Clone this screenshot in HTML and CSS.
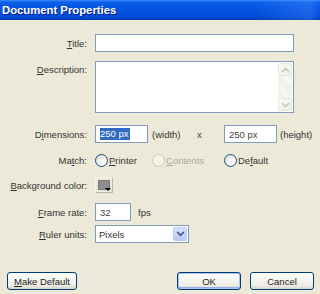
FILE: index.html
```html
<!DOCTYPE html>
<html>
<head>
<meta charset="utf-8">
<link rel="stylesheet" href="styles.css">
</head>
<body>
<div class="dialog">
  <div class="titlebar"><span>Document Properties</span></div>
  <div class="form">
    <div class="row r-title">
      <label class="lbl"><u>T</u>itle:</label>
      <div class="input wide"></div>
    </div>
    <div class="row r-desc">
      <label class="lbl"><u>D</u>escription:</label>
      <div class="textarea">
        <div class="ta-body"></div>
        <div class="scroll">
          <div class="sbtn"><svg width="9" height="6" viewBox="0 0 9 6"><path d="M1 5 L4.5 1.5 L8 5" fill="none" stroke="#C9C7BA" stroke-width="1.6"/></svg></div>
          <div class="track"></div>
          <div class="sbtn"><svg width="9" height="6" viewBox="0 0 9 6"><path d="M1 1 L4.5 4.5 L8 1" fill="none" stroke="#C9C7BA" stroke-width="1.6"/></svg></div>
        </div>
      </div>
    </div>
    <div class="row r-dim">
      <label class="lbl">D<u>i</u>mensions:</label>
      <div class="input dim"><span class="sel">250 px</span></div>
      <span class="unit-w">(width)</span>
      <span class="times">x</span>
      <div class="input dim"><span class="val">250 px</span></div>
      <span class="unit-h">(height)</span>
    </div>
    <div class="row r-match">
      <label class="lbl">Ma<u>t</u>ch:</label>
      <div class="opt o1"><span class="radio"></span><span><u>P</u>rinter</span></div>
      <div class="opt o2 disabled"><span class="radio"></span><span><u>C</u>ontents</span></div>
      <div class="opt"><span class="radio"></span><span>De<u>f</u>ault</span></div>
    </div>
    <div class="row r-bg">
      <label class="lbl"><u>B</u>ackground color:</label>
      <div class="swatch"><div class="chip"></div><span class="tri"></span></div>
    </div>
    <div class="row r-fps">
      <label class="lbl"><u>F</u>rame rate:</label>
      <div class="input fps"><span class="val">32</span></div>
      <span class="unit-fps">fps</span>
    </div>
    <div class="row r-ruler">
      <label class="lbl"><u>R</u>uler units:</label>
      <div class="select">
        <span class="val">Pixels</span>
        <span class="arrow"><svg width="9" height="6" viewBox="0 0 9 6"><path d="M1.2 1 L4.5 4.3 L7.8 1" fill="none" stroke="#4D6185" stroke-width="1.8"/></svg></span>
      </div>
    </div>
  </div>
  <div class="buttons">
    <div class="btn make"><span><u>M</u>ake Default</span></div>
    <div class="spacer"></div>
    <div class="btn ok"><span>OK</span></div>
    <div class="btn cancel"><span>Cancel</span></div>
  </div>
</div>
</body>
</html>
```
FILE: styles.css
```css
html, body {
  margin: 0;
  padding: 0;
}
body {
  width: 320px;
  height: 294px;
  overflow: hidden;
  background: #ECE9D8;
  font-family: "Liberation Sans", Arial, sans-serif;
  font-size: 9.5px;
  color: #222;
}
u { text-decoration: underline; text-underline-offset: 1px; }
.dialog {
  height: 294px;
  display: flex;
  flex-direction: column;
}
.titlebar {
  height: 20px;
  flex: none;
  box-sizing: border-box;
  padding-left: 2px;
  display: flex;
  align-items: center;
  color: #fff;
  font-weight: bold;
  font-size: 11.3px;
  text-shadow: 1px 1px 0 #0A1E8C;
  background:
    linear-gradient(90deg, rgba(0,0,0,0) 0%, rgba(0,0,0,0) 80%, rgba(80,140,255,0.35) 97%, rgba(0,0,0,0) 100%),
    linear-gradient(180deg, #3A8CFF 0px, #0A61E9 2px, #0558E4 6px, #0151DE 12px, #004AD5 17px, #003FC0 19px, #00349F 20px);
  border-bottom: 0;
}
.form {
  padding-top: 14px;
}
.row {
  display: flex;
  align-items: center;
  height: 18px;
}
.lbl {
  width: 87px;
  flex: none;
  margin-right: 8px;
  text-align: right;
  color: #333;
}
.input {
  box-sizing: border-box;
  height: 18px;
  border: 1px solid #7F9DB9;
  background: #fff;
  display: flex;
  align-items: center;
  padding: 0 3px;
  flex: none;
}
.input .val { color: #444; }
.wide { width: 199px; }
.r-desc {
  margin-top: 9px;
  height: 52px;
  align-items: flex-start;
}
.r-desc .lbl { padding-top: 3px; }
.textarea {
  box-sizing: border-box;
  width: 199px;
  height: 52px;
  border: 1px solid #7F9DB9;
  background: #fff;
  display: flex;
  padding: 1px 1px 1px 0;
}
.ta-body { flex: 1; }
.scroll {
  width: 14px;
  display: flex;
  flex-direction: column;
}
.sbtn {
  box-sizing: border-box;
  height: 13px;
  width: 14px;
  border: 1px solid #E8E6DA;
  border-radius: 2px;
  background: linear-gradient(135deg, #FBFBF8, #EEEDE5);
  display: flex;
  align-items: center;
  justify-content: center;
}
.track {
  flex: 1;
  background-color: #F4F3EE;
  background-image: repeating-linear-gradient(45deg, #EEEDE5 0 1px, #FBFBF9 1px 2px);
}
.r-dim { margin-top: 12px; }
.dim { width: 53px; padding-left: 4px; }
.sel {
  background: #316AC5;
  color: #fff;
  line-height: 12px;
  padding: 0 1px 0 0;
}
.unit-w { width: 45px; margin-left: 4px; flex: none; color: #333; }
.times { width: 27px; flex: none; color: #444; }
.unit-h { margin-left: 3px; color: #333; }
.r-match { margin-top: 8px; }
.opt {
  display: flex;
  align-items: center;
  flex: none;
  color: #333;
}
.o1 { width: 57px; }
.o2 { width: 72px; }
.radio {
  box-sizing: border-box;
  width: 13px;
  height: 13px;
  border-radius: 50%;
  border: 1px solid #1C5180;
  background: radial-gradient(circle at 65% 65%, #FFFFFF 0%, #F2F2EE 40%, #D4D3CB 100%);
  margin-right: 1px;
  flex: none;
}
.disabled { color: #ACA899; }
.disabled .radio {
  border-color: #CAC8BB;
  background: #F5F4EA;
}
.r-bg { margin-top: 8px; height: 16px; }
.swatch {
  box-sizing: border-box;
  width: 18px;
  height: 16px;
  padding: 2px;
  border: 1px solid #F6F5F0;
  border-right-color: #B9B6A6;
  border-bottom-color: #B9B6A6;
  background: #ECE9D8;
  position: relative;
  flex: none;
}
.chip {
  width: 100%;
  height: 100%;
  background: #8C8C8C;
  box-sizing: border-box;
  border: 1px solid #7A7A7A;
}
.tri {
  position: absolute;
  right: 1px;
  bottom: 1px;
  width: 0;
  height: 0;
  border-left: 3px solid transparent;
  border-right: 3px solid transparent;
  border-top: 3px solid #000;
}
.r-fps { margin-top: 10px; }
.fps { width: 36px; padding-left: 4px; }
.unit-fps { margin-left: 7px; color: #333; }
.r-ruler { margin-top: 4px; }
.select {
  box-sizing: border-box;
  width: 94px;
  height: 18px;
  border: 1px solid #7F9DB9;
  background: #fff;
  display: flex;
  align-items: center;
  padding: 1px;
  flex: none;
}
.select .val { flex: 1; padding-left: 2px; color: #333; }
.arrow {
  box-sizing: border-box;
  width: 14px;
  height: 14px;
  border-radius: 2px;
  border: 1px solid #B9CDF7;
  background: linear-gradient(180deg, #D6E3FD, #B8CBF8);
  display: flex;
  align-items: center;
  justify-content: center;
}
.buttons {
  margin-top: auto;
  margin-bottom: 4px;
  display: flex;
  padding: 0 6px 0 7px;
}
.spacer { flex: 1; }
.btn {
  box-sizing: border-box;
  height: 18px;
  border: 1px solid #003C74;
  border-radius: 3px;
  background: linear-gradient(180deg, #FFFFFF 0%, #F6F5F1 40%, #ECEBE4 80%, #D6D0C5 100%);
  display: flex;
  align-items: center;
  justify-content: center;
  color: #222;
}
.make { width: 70px; }
.ok { width: 64px; margin-right: 9px; box-shadow: inset 0 0 0 1px #A9C4F5, inset 0 -1px 0 1px #8FAEEA; }
.cancel { width: 64px; }
```
